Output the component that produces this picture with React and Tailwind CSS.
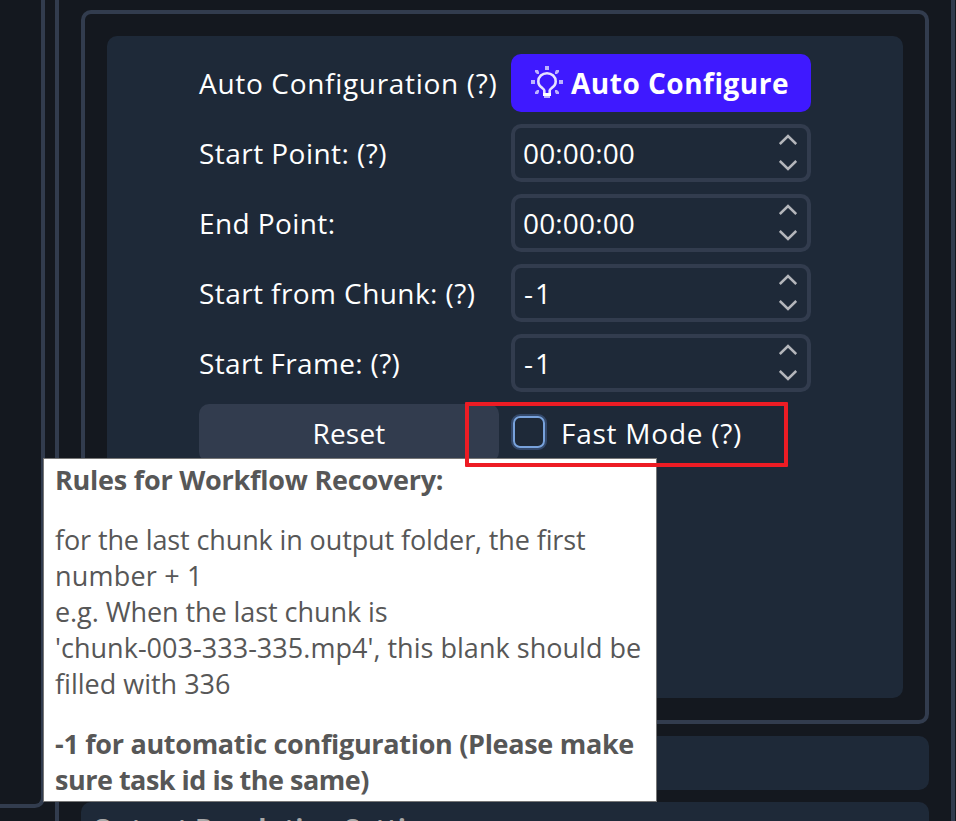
import React from "react";

function Chevron({ d }) {
  return (
    <svg width="18" height="12" viewBox="0 0 18 12" fill="none" stroke="#b4b6bb" strokeWidth="2.5">
      <path d={d} />
    </svg>
  );
}

function Label({ children, className = "" }) {
  return <div className={`flex h-[58px] items-center whitespace-nowrap ${className}`}>{children}</div>;
}

function SpinBox({ value, className = "" }) {
  return (
    <div className="flex h-[58px] items-center justify-between rounded-[10px] border-4 border-[#323c4e] pr-[10px] pl-2">
      <span className={`whitespace-nowrap ${className}`}>{value}</span>
      <div className="flex flex-col gap-[13px] pb-px">
        <Chevron d="M0.8 10L9 2L17.2 10" />
        <Chevron d="M0.8 2L9 10L17.2 2" />
      </div>
    </div>
  );
}

function Bulb() {
  return (
    <svg width="32" height="32" viewBox="0 0 32 32" className="-mt-[2px] shrink-0">
      <g fill="#bdb3ff">
        <rect x="14" y="0" width="4" height="4" />
        <rect x="0" y="14" width="4" height="4" />
        <rect x="28" y="14" width="4" height="4" />
        <path d="M4 4h3l1 2v2h-2l-2-2zM28 4h-3l-1 2v2h2l2-2zM4 28h3l1-2v-2h-2l-2 2zM28 28h-3l-1-2v-2h2l2 2z" />
        <rect x="13" y="29" width="6" height="3" />
      </g>
      <path
        d="M13.3 28.5V24.5C13.3 23.6 12.5 22.9 11.5 22.2C8.8 20.4 7.3 18.4 7.3 15.5C7.3 10.6 11.2 7.3 16 7.3S24.7 10.6 24.7 15.5C24.7 18.4 23.2 20.4 20.5 22.2C19.5 22.9 18.7 23.6 18.7 24.5V28.5Z"
        fill="none"
        stroke="#e6e1ff"
        strokeWidth="2.6"
      />
      <rect x="12" y="27" width="8" height="3" fill="#fff" />
    </svg>
  );
}

export default function App() {
  return (
    <div className="relative flex h-[821px] w-[956px] overflow-hidden bg-[#14181f] font-['Open_Sans','Noto_Sans',sans-serif] text-[28px] leading-9 text-white">
      <div className="h-[808px] w-[45px] shrink-0 rounded-br-[10px] border-r-4 border-b-4 border-[#323c4e]" />

      <div className="ml-[10px] flex h-[821px] w-[900px] shrink-0 flex-col gap-3 border-x-4 border-[#323c4e] px-[22px] pt-[10px]">
        <div className="h-[714px] shrink-0 rounded-[10px] border-4 border-[#323c4e] p-[22px]">
          <div className="h-[662px] rounded-[10px] bg-[#1e2938] pt-[18px] pl-[92px]">
            <div className="grid w-[612px] grid-cols-[300px_300px] gap-3">
              <Label className="tracking-[0.68px]">Auto Configuration (?)</Label>
              <button className="flex h-[58px] items-center rounded-[10px] bg-[#3f19ff] pl-5 font-bold whitespace-nowrap">
                <Bulb />
                <span className="ml-2 tracking-[0.5px]">Auto Configure</span>
              </button>
              <Label className="tracking-[0.45px]">Start Point: (?)</Label>
              <SpinBox value="00:00:00" className="tracking-[0.15px]" />
              <Label className="tracking-[0.4px]">End Point:</Label>
              <SpinBox value="00:00:00" className="tracking-[0.15px]" />
              <Label className="tracking-[0.42px]">Start from Chunk: (?)</Label>
              <SpinBox value="-1" className="pl-px tracking-[2px]" />
              <Label className="tracking-[0.33px]">Start Frame: (?)</Label>
              <SpinBox value="-1" className="pl-px tracking-[2px]" />
              <button className="h-[58px] rounded-[10px] bg-[#323c4e] tracking-[0.2px]">Reset</button>
              <div className="flex h-[58px] items-center">
                <span className="-mt-[2px] h-9 w-9 shrink-0 rounded-[9px] border-2 border-[#34496b]">
                  <span className="block h-full w-full rounded-[7px] border-2 border-[#78a2dc]" />
                </span>
                <span className="ml-[14px] tracking-[0.75px] whitespace-nowrap">Fast Mode (?)</span>
              </div>
            </div>
          </div>
        </div>
        <div className="h-[54px] shrink-0 rounded-[10px] bg-[#1e2938]" />
        <div className="h-[54px] shrink-0 rounded-[10px] bg-[#1e2938] pt-2 pl-[11px] text-[27px] font-bold tracking-[-0.2px] whitespace-nowrap text-[#a8a8a8]">
          Output Resolution Settings
        </div>
      </div>

      <div className="absolute top-[458px] left-[43px] flex h-[344px] w-[614px] flex-col gap-6 border border-[#767676] bg-white pt-[3px] pl-[11px] text-[27px] whitespace-nowrap text-[#575757]">
        <div className="font-bold tracking-[-0.24px]">Rules for Workflow Recovery:</div>
        <div>
          <div className="tracking-[-0.12px]">for the last chunk in output folder, the first</div>
          <div className="tracking-[0.2px]">number + 1</div>
          <div className="tracking-[-0.07px]">e.g. When the last chunk is</div>
          <div className="tracking-[0.03px]">'chunk-003-333-335.mp4', this blank should be</div>
          <div>filled with 336</div>
        </div>
        <div className="font-bold">
          <div className="tracking-[-0.31px]">-1 for automatic configuration (Please make</div>
          <div className="tracking-[-0.5px]">sure task id is the same)</div>
        </div>
      </div>

      <div className="absolute top-[402px] left-[465px] h-[65px] w-[323px] rounded-[1px] border-4 border-[#ed1c24]" />
    </div>
  );
}
